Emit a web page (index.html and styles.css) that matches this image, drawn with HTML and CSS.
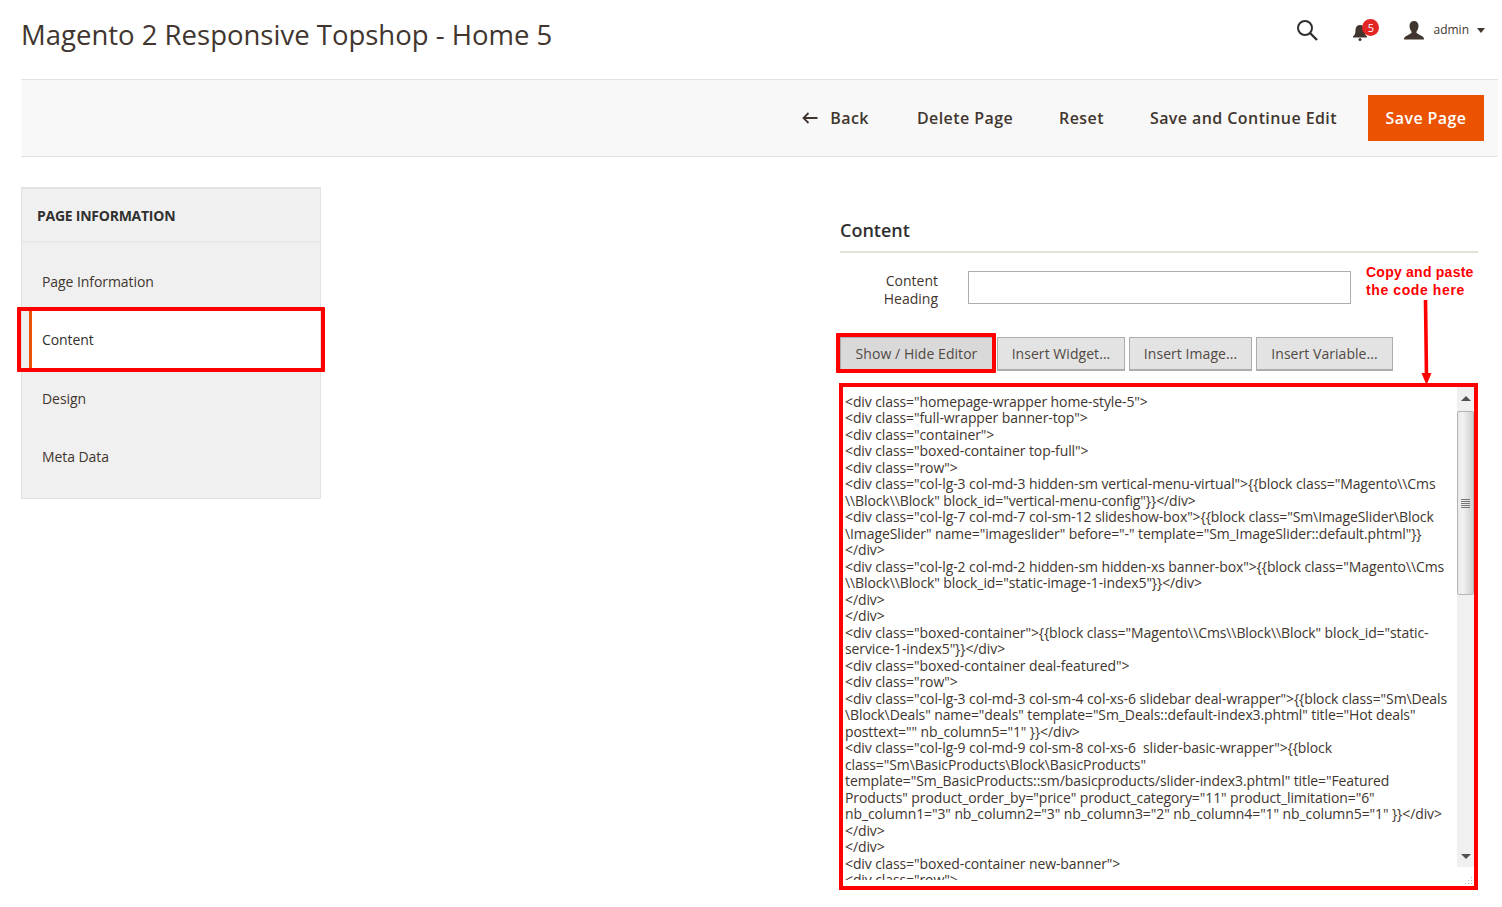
FILE: index.html
```html
<!DOCTYPE html>
<html lang="en">
<head>
<meta charset="utf-8">
<title>Magento 2 Responsive Topshop - Home 5</title>
<link rel="stylesheet" href="styles.css">
</head>
<body>
<div class="page">
  <header class="top">
    <h1 class="title">Magento 2 Responsive Topshop - Home 5</h1>
    <div class="tools">
      <svg class="ic-search" width="22" height="22" viewBox="0 0 22 22"><circle cx="9" cy="9" r="7" fill="none" stroke="#303030" stroke-width="2"/><path d="M14 14l7 7" stroke="#303030" stroke-width="2.4" fill="none"/></svg>
      <div class="bell">
        <svg width="16" height="18" viewBox="0 0 16 18"><path d="M8 2c3 0 4.500 2 4.500 5 0 3 .5 5 2.500 6.500v1H1v-1C3 12 3.500 10 3.500 7 3.500 4 5 2 8 2z" fill="#41362f"/><circle cx="8" cy="16.500" r="1.500" fill="#41362f"/></svg>
        <span class="badge">5</span>
      </div>
      <div class="user">
        <svg width="20" height="19" viewBox="0 0 20 19"><path d="M10 0c3 0 4.500 2 4.500 5 0 2.500-1 4.500-2 5.500v1.500l6 3.500c1 .5 1.500 1.500 1.500 3H0c0-1.500.5-2.500 1.500-3l6-3.500v-1.500c-1-1-2-3-2-5.500C5.500 2 7 0 10 0z" fill="#41362f"/></svg>
        <span class="user-name">admin</span>
        <span class="caret"></span>
      </div>
    </div>
  </header>

  <div class="actions">
    <a class="act act-back"><svg width="16" height="12" viewBox="0 0 16 12"><path d="M6.500 1L1.500 6l5 5M2 6h13.500" fill="none" stroke="#41362f" stroke-width="1.800"/></svg><span>Back</span></a>
    <a class="act act-delete">Delete Page</a>
    <a class="act act-reset">Reset</a>
    <a class="act act-continue">Save and Continue Edit</a>
    <a class="save">Save Page</a>
  </div>

  <main class="main">
    <aside class="side">
      <div class="side-head">PAGE INFORMATION</div>
      <ul class="side-list">
        <li class="side-item">Page Information</li>
        <li class="side-item active">Content<span class="mark mark-side"></span></li>
        <li class="side-item">Design</li>
        <li class="side-item">Meta Data</li>
      </ul>
    </aside>

    <section class="content">
      <h2 class="sec-title">Content</h2>
      <div class="field">
        <label class="field-label">Content<br>Heading</label>
        <div class="field-input"></div>
      </div>
      <div class="note"><span class="note-a">Copy and paste</span><br><span class="note-b">the code here</span></div>
      <svg class="note-arrow" width="12" height="86" viewBox="0 0 12 86"><path d="M5.500 0L6.500 76" stroke="#f00" stroke-width="3.600" fill="none"/><path d="M1.500 73h10l-5 12z" fill="#f00"/></svg>
      <div class="btns">
        <button class="btn btn-on">Show / Hide Editor<span class="mark mark-btn"></span></button>
        <button class="btn">Insert Widget...</button>
        <button class="btn">Insert Image...</button>
        <button class="btn">Insert Variable...</button>
      </div>
      <div class="editor">
        <div class="code">&lt;div class="homepage-wrapper home-style-5"&gt;
&lt;div class="full-wrapper banner-top"&gt;
&lt;div class="container"&gt;
&lt;div class="boxed-container top-full"&gt;
&lt;div class="row"&gt;
&lt;div class="col-lg-3 col-md-3 hidden-sm vertical-menu-virtual"&gt;{{block class="Magento\\Cms
\\Block\\Block" block_id="vertical-menu-config"}}&lt;/div&gt;
&lt;div class="col-lg-7 col-md-7 col-sm-12 slideshow-box"&gt;{{block class="Sm\ImageSlider\Block
\ImageSlider" name="imageslider" before="-" template="Sm_ImageSlider::default.phtml"}}
&lt;/div&gt;
&lt;div class="col-lg-2 col-md-2 hidden-sm hidden-xs banner-box"&gt;{{block class="Magento\\Cms
\\Block\\Block" block_id="static-image-1-index5"}}&lt;/div&gt;
&lt;/div&gt;
&lt;/div&gt;
&lt;div class="boxed-container"&gt;{{block class="Magento\\Cms\\Block\\Block" block_id="static-
service-1-index5"}}&lt;/div&gt;
&lt;div class="boxed-container deal-featured"&gt;
&lt;div class="row"&gt;
&lt;div class="col-lg-3 col-md-3 col-sm-4 col-xs-6 slidebar deal-wrapper"&gt;{{block class="Sm\Deals
\Block\Deals" name="deals" template="Sm_Deals::default-index3.phtml" title="Hot deals"
posttext="" nb_column5="1" }}&lt;/div&gt;
&lt;div class="col-lg-9 col-md-9 col-sm-8 col-xs-6  slider-basic-wrapper"&gt;{{block
class="Sm\BasicProducts\Block\BasicProducts"
template="Sm_BasicProducts::sm/basicproducts/slider-index3.phtml" title="Featured
Products" product_order_by="price" product_category="11" product_limitation="6"
nb_column1="3" nb_column2="3" nb_column3="2" nb_column4="1" nb_column5="1" }}&lt;/div&gt;
&lt;/div&gt;
&lt;/div&gt;
&lt;div class="boxed-container new-banner"&gt;
&lt;div class="row"&gt;</div>
        <div class="scroll">
          <div class="scroll-btn"><span class="tri tri-up"></span></div>
          <div class="scroll-thumb"><span class="grip"></span></div>
          <div class="scroll-btn scroll-btn-end"><span class="tri tri-down"></span></div>
        </div>
        <svg class="resize" width="12" height="10" viewBox="0 0 12 10"><path d="M9 1h1v1H9zM6 4h1v1H6zM9 4h1v1H9zM3 7h1v1H3zM6 7h1v1H6zM9 7h1v1H9z" fill="#bbb"/></svg>
      </div>
    </section>
  </main>
</div>
</body>
</html>
```

FILE: styles.css
```css
* { box-sizing: border-box; }
html, body { margin: 0; padding: 0; height: 907px; overflow: hidden; background: #fff; }
body { font-family: "Open Sans", sans-serif; color: #41362f; }
.page { padding: 0 4px 0 21px; }

.top { height: 80px; display: flex; justify-content: space-between; align-items: flex-start; border-bottom: 1px solid #e3e3e3; }
.title { margin: 16px 0 0; font-size: 27.500px; line-height: 38px; font-weight: 400; color: #41362f; }
.tools { display: flex; align-items: center; margin-top: 19px; padding-right: 13px; }
.ic-search { display: block; margin-right: 34px; }
.bell { position: relative; width: 16px; height: 20px; margin-right: 36px; padding-top: 3px; }
.bell svg { display: block; }
.badge { position: absolute; left: 10px; top: -1px; width: 17px; height: 17px; border-radius: 50%; background: #e22626; color: #fff; font-size: 11px; line-height: 17px; text-align: center; }
.user { display: flex; align-items: center; }
.user svg { display: block; }
.user-name { margin-left: 9px; font-size: 12px; line-height: 20px; }
.caret { margin-left: 8px; border: 4px solid transparent; border-top: 5px solid #41362f; border-bottom: 0; }

.actions { height: 77px; background: #f8f8f8; border-bottom: 1px solid #e3e3e3; display: flex; align-items: center; justify-content: flex-end; padding-right: 14px; }
.act { font-size: 16px; letter-spacing: .42px; font-weight: 600; color: #41362f; margin-right: 48px; line-height: 22px; display: flex; align-items: center; }
.act-delete { margin-right: 46px; }
.act-reset { margin-right: 46px; }
.act-continue { margin-right: 31px; }
.act-back svg { display: block; margin-right: 12px; }
.save { width: 116px; height: 46px; background: #eb5202; color: #fff; font-size: 16px; letter-spacing: .42px; font-weight: 600; line-height: 46px; text-align: center; }

.main { display: flex; align-items: flex-start; justify-content: space-between; padding-top: 30px; padding-right: 20px; }
.side { width: 300px; height: 312px; background: #f0f0f0; border: 1px solid #e3e3e3; border-top-width: 2px; }
.side-head { height: 54px; border-bottom: 2px solid #e8e8e8; padding-left: 15px; font-size: 14px; font-weight: 700; line-height: 53px; letter-spacing: -.25px; color: #303030; }
.side-list { list-style: none; margin: 0; padding: 10px 0 0; }
.side-item { position: relative; height: 58.330px; padding-left: 20px; font-size: 14px; line-height: 58px; letter-spacing: -.07px; color: #41362f; }
.active { background: #fff; border-left: 3px solid #eb5202; margin-left: 7px; padding-left: 10px; line-height: 57px; color: #303030; }
.mark { position: absolute; border: 4px solid #f00; border-radius: 1px; }
.mark-side { left: -15px; right: -5px; top: -4px; height: 65px; }

.content { position: relative; width: 638px; padding-top: 30px; }
.sec-title { margin: 0; height: 36px; font-size: 18px; line-height: 27px; font-weight: 600; color: #303030; border-bottom: 2px solid #e3e1da; }
.field { display: flex; align-items: flex-start; margin-top: 18px; }
.field-label { width: 98px; margin-top: 1px; text-align: right; font-size: 14px; line-height: 18px; }
.field-input { margin-left: 30px; width: 383px; height: 33px; border: 1px solid #adadad; background: #fff; }
.note { position: absolute; left: 526px; top: 76px; font-family: "Liberation Sans", sans-serif; font-size: 14px; line-height: 18px; font-weight: 700; color: #f00; }
.note-a { letter-spacing: .24px; }
.note-b { letter-spacing: .6px; }
.note-arrow { position: absolute; left: 580px; top: 113px; }

.btns { display: flex; gap: 4px; margin-top: 29px; height: 34px; }
.btn { position: relative; height: 34px; padding: 0; white-space: nowrap; border: 1px solid #adadad; border-bottom-width: 2px; background: #e3e3e3; border-radius: 0; font-family: "Open Sans", sans-serif; font-size: 14px; letter-spacing: .05px; color: #514943; }
.btn-on { width: 153px; background: #d9d9d9; }
.mark-btn { left: -5px; right: -4px; top: -5px; bottom: -4px; }
.btn:nth-child(2) { width: 128px; }
.btn:nth-child(3) { width: 123px; }
.btn:nth-child(4) { width: 137px; }

.editor { position: relative; margin-top: 12px; margin-left: -1px; width: 639px; height: 507px; border: 4px solid #f00; background: #fff; overflow: hidden; padding: 6.500px 0 0 2px; }
.code { white-space: pre; font-size: 14px; line-height: 16.500px; letter-spacing: -.1px; color: #41362f; height: 486.500px; overflow: hidden; }
.scroll { position: absolute; right: 0; top: 0; width: 17px; height: 480px; background: #f0f0f0; }
.scroll-btn { height: 22px; display: flex; align-items: center; justify-content: center; }
.scroll-btn-end { position: absolute; bottom: 0; left: 0; right: 0; }
.tri { border: 5px solid transparent; }
.tri-up { border-bottom: 5px solid #505050; border-top: 0; }
.tri-down { border-top: 5px solid #505050; border-bottom: 0; }
.scroll-thumb { height: 184px; margin-top: 2px; border: 1px solid #b5b5b5; border-radius: 2px; background: linear-gradient(to right, #e8e8e8, #f2f2f2 30%, #cfcfcf); display: flex; align-items: center; justify-content: center; }
.grip { width: 9px; height: 9px; background: repeating-linear-gradient(to bottom, #777 0 1px, transparent 1px 2px); }
.resize { position: absolute; right: 0; bottom: 0; }
```
